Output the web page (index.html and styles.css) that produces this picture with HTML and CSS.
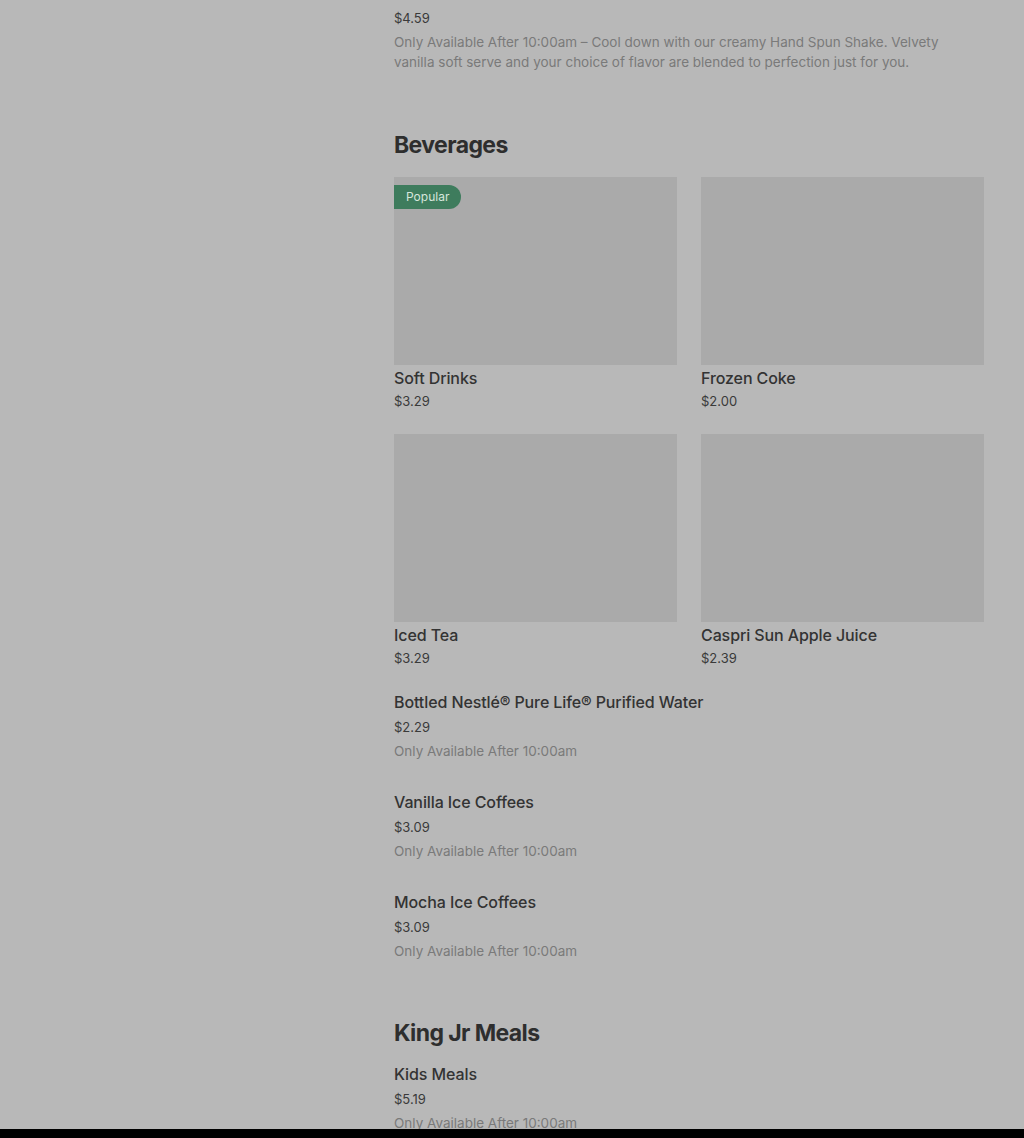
FILE: index.html
```html
<!DOCTYPE html>
<html lang="en">
<head>
    <meta charset="UTF-8">
    <meta name="viewport" content="width=device-width, initial-scale=1.0">
    <title>Menu</title>
    <link rel="stylesheet" href="styles.css">
</head>
<body>
    <div class="page">
        <aside class="sidebar"></aside>

        <main class="menu">
            <div class="item item-cut">
                <div class="price">$4.59</div>
                <p class="desc">Only Available After 10:00am – Cool down with our creamy Hand Spun Shake. Velvety vanilla soft serve and your choice of flavor are blended to perfection just for you.</p>
            </div>

            <section class="section">
                <h2>Beverages</h2>
                <div class="grid">
                    <div class="card">
                        <div class="thumb">
                            <span class="badge">Popular</span>
                        </div>
                        <div class="name">Soft Drinks</div>
                        <div class="price">$3.29</div>
                    </div>
                    <div class="card">
                        <div class="thumb"></div>
                        <div class="name">Frozen Coke</div>
                        <div class="price">$2.00</div>
                    </div>
                    <div class="card">
                        <div class="thumb"></div>
                        <div class="name">Iced Tea</div>
                        <div class="price">$3.29</div>
                    </div>
                    <div class="card">
                        <div class="thumb"></div>
                        <div class="name">Caspri Sun Apple Juice</div>
                        <div class="price">$2.39</div>
                    </div>
                </div>

                <div class="list">
                    <div class="item">
                        <div class="name">Bottled Nestlé® Pure Life® Purified Water</div>
                        <div class="price">$2.29</div>
                        <p class="desc">Only Available After 10:00am</p>
                    </div>
                    <div class="item">
                        <div class="name">Vanilla Ice Coffees</div>
                        <div class="price">$3.09</div>
                        <p class="desc">Only Available After 10:00am</p>
                    </div>
                    <div class="item">
                        <div class="name">Mocha Ice Coffees</div>
                        <div class="price">$3.09</div>
                        <p class="desc">Only Available After 10:00am</p>
                    </div>
                </div>
            </section>

            <section class="section section-next">
                <h2>King Jr Meals</h2>
                <div class="list">
                    <div class="item">
                        <div class="name">Kids Meals</div>
                        <div class="price">$5.19</div>
                        <p class="desc">Only Available After 10:00am</p>
                    </div>
                </div>
            </section>
        </main>
    </div>

    <div class="sheet-edge"></div>
</body>
</html>
```

FILE: styles.css
```css
* {
    margin: 0;
    padding: 0;
    box-sizing: border-box;
    font-family: 'Inter', 'Liberation Sans', sans-serif;
}

body {
    background: #b8b8b8;
    color: #333;
    overflow: hidden;
}

.page {
    display: flex;
    height: 1138px;
}

.sidebar {
    width: 394px;
    flex-shrink: 0;
}

.menu {
    width: 590px;
}

.price {
    font-size: 13px;
    line-height: 20px;
    color: #3a3a3a;
}

.desc {
    font-size: 13.5px;
    line-height: 20px;
    color: #7a7a7a;
    margin-top: 4px;
    max-width: 552px;
}

.section {
    padding-top: 40px;
}

.section h2 {
    font-size: 23px;
    line-height: 32px;
    font-weight: 700;
    color: #2e2e2e;
    letter-spacing: -0.6px;
    margin-bottom: 16px;
}

.grid {
    display: grid;
    grid-template-columns: 1fr 1fr;
    column-gap: 24px;
    row-gap: 22px;
}

.thumb {
    position: relative;
    height: 188px;
    background: #aaaaaa;
    margin-bottom: 1px;
}

.badge {
    position: absolute;
    top: 8px;
    left: 0;
    height: 24px;
    padding: 0 12px;
    border-radius: 0 12px 12px 0;
    background: #3e7c5d;
    color: #d6e6dc;
    font-size: 12px;
    line-height: 24px;
}

.name {
    font-size: 16px;
    line-height: 24px;
    font-weight: 500;
    letter-spacing: -0.1px;
    color: #333;
}

.card .price {
    line-height: 22px;
}

.list {
    padding-top: 9px;
}

.item {
    padding: 12px 0 17px;
}

.item.item-cut {
    padding-top: 8px;
}

.list .name + .price {
    margin-top: 3px;
}

.section-next {
    padding-top: 39px;
}

.section-next h2 {
    margin-bottom: 13px;
}

.section-next .list {
    padding-top: 0;
}

.section-next .item:first-child {
    padding-top: 0;
}

.sheet-edge {
    position: fixed;
    left: 0;
    right: 0;
    bottom: 0;
    height: 9px;
    background: #000;
}
```
